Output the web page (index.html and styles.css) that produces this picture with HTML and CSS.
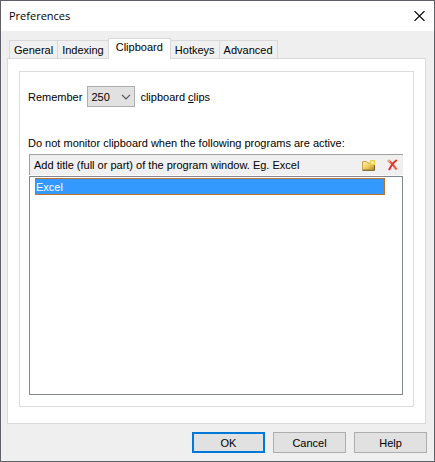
FILE: index.html
```html
<!DOCTYPE html>
<html lang="en">
<head>
<meta charset="utf-8">
<title>Preferences</title>
<link rel="stylesheet" href="styles.css">
</head>
<body>
<form class="dialog">
  <header class="titlebar">
    <h1 class="title">Preferences</h1>
    <button class="close" type="button" aria-label="Close">
      <svg width="11" height="10" viewBox="0 0 11 10"><path d="M.5 0L10.500 10M10.500 0L.5 10" stroke="#000" stroke-width="1.1"/></svg>
    </button>
  </header>
  <nav class="tabs" role="tablist">
    <button class="tab" type="button" role="tab">General</button>
    <button class="tab" type="button" role="tab">Indexing</button>
    <button class="tab selected" type="button" role="tab" aria-selected="true">Clipboard</button>
    <button class="tab" type="button" role="tab">Hotkeys</button>
    <button class="tab" type="button" role="tab">Advanced</button>
  </nav>
  <main class="panel">
    <section class="group">
      <div class="remember">
        <label for="count">Remember</label>
        <span class="picker">
          <select id="count" class="count"><option>250</option></select>
          <svg class="chevron" width="10" height="6" viewBox="0 0 10 6"><path d="M1 .8L5 4.8L9 .8" fill="none" stroke="#555" stroke-width="1.2"/></svg>
        </span>
        <label for="count">clipboard <u>c</u>lips</label>
      </div>
      <p class="caption" id="caption">Do not monitor clipboard when the following programs are active:</p>
      <div class="toolbar">
        <span class="hint">Add title (full or part) of the program window. Eg. Excel</span>
        <button class="tool" type="button" aria-label="New">
          <svg width="13" height="12" viewBox="0 0 13 12">
            <defs><linearGradient id="folder" x1="0" y1="0" x2="1" y2="1"><stop offset="0" stop-color="#fff3b0"/><stop offset=".5" stop-color="#f0cf62"/><stop offset="1" stop-color="#b8871c"/></linearGradient></defs>
            <path d="M.5 2.500h4l1.500 1.500h6.500v7h-12z" fill="url(#folder)" stroke="#c9a548"/>
            <path d="M.5 11.300h12v-5" fill="none" stroke="#6e5a2a"/>
            <path d="M8 1h5v5h-5z" fill="#f2d04a"/>
            <path d="M9.500 2.500h2v2h-2z" fill="#fffbe0"/>
          </svg>
        </button>
        <button class="tool" type="button" aria-label="Delete">
          <svg width="11" height="12" viewBox="0 0 11 12"><path d="M1.500 1.500Q6 4.500 9.500 10.500" fill="none" stroke="#ee5442" stroke-width="2.200"/><path d="M9.800 1Q5 4.500 2 11" fill="none" stroke="#e2301f" stroke-width="2"/><path d="M.5 1.500L3 2.500" stroke="#f59a8b" stroke-width="2"/></svg>
        </button>
      </div>
      <ul class="list" role="listbox" aria-labelledby="caption">
        <li class="item" role="option" aria-selected="true">Excel</li>
      </ul>
    </section>
  </main>
  <footer class="actions">
    <button class="action default" type="submit">OK</button>
    <button class="action" type="button">Cancel</button>
    <button class="action" type="button">Help</button>
  </footer>
</form>
</body>
</html>
```
FILE: styles.css
```css
* { box-sizing: border-box; }
body { margin: 0; }
button, select { font: inherit; color: inherit; margin: 0; padding: 0; border-radius: 0; }
svg { display: block; }

.dialog {
  display: flex;
  flex-direction: column;
  min-height: 100vh;
  border: 1px solid #5f6068;
  background: #efefef;
  color: #000;
  font: 11px/16px "Liberation Sans", Tahoma, sans-serif;
}

.titlebar {
  display: flex;
  align-items: center;
  justify-content: space-between;
  height: 30px;
  padding: 0 9px 0 8px;
  background: #fff;
}
.title { margin: 0; font: 11px/16px "Open Sans", "Segoe UI", sans-serif; }
.close { border: 0; background: none; }

.tabs {
  display: flex;
  align-items: flex-end;
  height: 27px;
  margin: 0 8px;
}
.tab {
  height: 18px;
  padding: 0 4px;
  border: 1px solid #d9d9d9;
  border-width: 1px 1px 0 0;
  background: #f0f0f0;
}
.tab:first-child { border-left-width: 1px; }
.tab.selected {
  height: 21px;
  margin: 0 0 -1px -1px;
  padding: 0 7px 4px;
  border-left-width: 1px;
  background: #fff;
  z-index: 1;
}

.panel {
  display: flex;
  flex: 1;
  margin: 0 8px 0 6px;
  padding: 12px 11px 16px;
  border: 1px solid #d9d9d9;
  background: #fff;
}
.group {
  display: flex;
  flex: 1;
  flex-direction: column;
  padding: 14px 10px 11px 8px;
  border: 1px solid #dcdcdc;
}
.remember { display: flex; align-items: center; gap: 5px; }
.picker { display: grid; align-items: center; }
.count, .chevron { grid-area: 1 / 1; }
.count {
  width: 48px;
  height: 21px;
  padding: 0 3px;
  border: 1px solid #adadad;
  background: #e1e1e1;
  appearance: none;
}
.chevron { justify-self: end; margin-right: 4px; pointer-events: none; }
.caption { margin: 28px 0 3px; }
.toolbar {
  display: flex;
  align-items: center;
  gap: 12px;
  height: 21px;
  margin-left: 1px;
  padding: 0 5px 0 4px;
  border-top: 1px solid #a0a0a0;
  border-left: 1px solid #a0a0a0;
  background: #f0f0f0;
}
.hint { flex: 1; }
.tool { border: 0; background: none; }
.list {
  flex: 1;
  margin: 1px 0 0 1px;
  padding: 1px 17px 1px 5px;
  border: 1px solid #828790;
  list-style: none;
}
.item {
  height: 17px;
  border: 1px solid #c0702f;
  background: #3399ff;
  color: #fff;
}

.actions {
  display: flex;
  justify-content: flex-end;
  gap: 8px;
  padding: 8px 7px;
}
.action {
  width: 73px;
  height: 21px;
  border: 1px solid #adadad;
  background: #e1e1e1;
}
.action.default { border: 2px solid #0078d7; }
```
